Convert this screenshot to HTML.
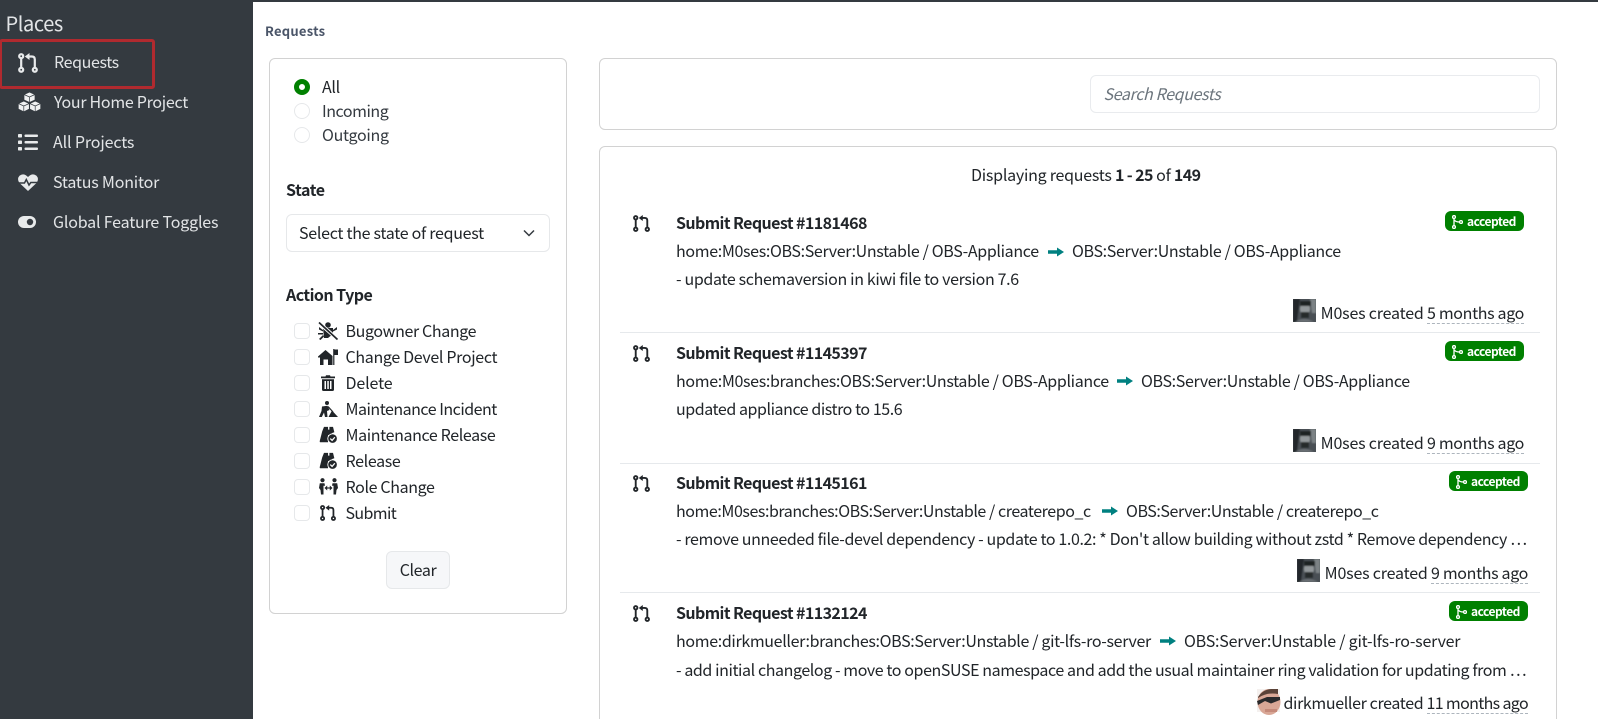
<!DOCTYPE html>
<html lang="en">
<head>
<meta charset="utf-8">
<title>Requests</title>
<style>
html,body{margin:0;padding:0;width:1598px;height:719px;overflow:hidden;background:#fff}
body{position:relative;font-family:"Noto Sans CJK JP","Liberation Sans",sans-serif;font-size:16px;color:#212529;letter-spacing:-.34px}
.t{position:absolute;white-space:nowrap;line-height:24px;height:24px;transform:translateY(-1px)}
.b{font-weight:700}
.ti{letter-spacing:-.59px}
.box{position:absolute;box-sizing:border-box}
.card{border:1px solid #d2d2d2;border-radius:6px;background:#fff}
#side{left:0;top:0;width:253px;height:719px;background:#343a40}
#top{left:0;top:0;width:1598px;height:2px;background:#343a40}
.n{color:#e2e4e6}
.ck{left:294px;width:16px;height:16px;border:1px solid #e6e8ea;border-radius:4px}
.rd{left:294px;width:16px;height:16px;border:1px solid #e6e8ea;border-radius:50%}
.sep{left:620px;width:920px;height:1px;background:#e6e9ec}
.badge{height:20px;width:79px;background:#008000;border-radius:6px;color:#fff;font-size:12px;font-weight:700;line-height:20px;letter-spacing:-.5px}
.badge span{position:absolute;left:22px;top:1px}
.badge svg{position:absolute;left:7px;top:4px}
.au{letter-spacing:-.19px}
.dot{border-bottom:1px dashed #adb5bd;line-height:21px;display:inline-block;height:21px;letter-spacing:-.34px}
svg{position:absolute;overflow:visible}
.av{width:23px;height:23px}
</style>
</head>
<body>
<svg width="0" height="0" style="position:absolute">
<defs>
<filter id="soft" x="0" y="0" width="1" height="1"><feGaussianBlur stdDeviation=".7"/></filter>
<symbol id="pr" viewBox="0 0 20 20"><g fill="none" stroke="currentColor" stroke-width="2.200"><circle cx="3.2" cy="3.2" r="2"/><circle cx="3.2" cy="16.8" r="2"/><circle cx="16.8" cy="16.8" r="2"/><path d="M3.2 5.2V14.800M16.800 14.800V6.500Q16.800 3.500 13.800 3.500H10"/></g><path d="M11.500 0L6.800 3.500L11.500 7Z" fill="currentColor"/></symbol>
<symbol id="merge" viewBox="0 0 11 14"><g fill="none" stroke="#fff" stroke-width="1.300"><circle cx="2" cy="2" r="1.400"/><circle cx="2" cy="12" r="1.400"/><circle cx="9" cy="7" r="1.400"/><path d="M2 3.500V10.500M2.500 5Q3.500 7 7.500 7"/></g></symbol>
<symbol id="rel" viewBox="0 0 20 20"><path fill="currentColor" d="M5 1H9.500V18H.8Q0 18 .3 16.500L3 6ZM11 1H15L16.500 7Q12 8 11 12ZM9.500 4H11V10H9.500Z"/><circle cx="14.500" cy="14" r="5.300" fill="currentColor" stroke="#fff" stroke-width="1"/><path d="M12 14L14 16L17 12.500" fill="none" stroke="#fff" stroke-width="1.400"/></symbol>
<symbol id="arrow" viewBox="0 0 16 10"><path fill="#008080" d="M0 3.200H9V.5L16 5L9 9.500V6.800H0Z"/></symbol>
<symbol id="m0" viewBox="0 0 23 23"><rect width="23" height="23" fill="#4a5054"/><g filter="url(#soft)"><rect width="23" height="23" fill="#4a5054"/><path d="M0 0H7L4 23H0Z" fill="#23272b"/><path d="M17 0H23V14H19Z" fill="#7b8285"/><ellipse cx="12" cy="10" rx="5" ry="6.500" fill="#92979a"/><path d="M7 2H18V7H7Z" fill="#1d2023"/><path d="M8 13H16V19H8Z" fill="#25292c"/><path d="M2 23Q11 17 21 23Z" fill="#6a7074"/></g></symbol>
</defs>
</svg>

<div id="side" class="box"></div>
<div id="top" class="box"></div>
<div class="t n" style="left:5.500px;top:12px;font-size:20px;letter-spacing:-.4px">Places</div>
<div class="box" style="left:-1px;top:39px;width:156px;height:50px;border:3px solid #b02a2f;border-radius:3px"></div>

<svg style="left:18px;top:53px;color:#e8eaeb" width="20" height="20"><use href="#pr"/></svg>
<div class="t n" style="left:54px;top:50px;letter-spacing:-.38px">Requests</div>
<svg style="left:18px;top:92px" width="23" height="20" viewBox="0 0 23 20"><g fill="#f0f1f2" stroke="#343a40" stroke-width=".7"><path d="M11.500 0L17 2.500V8L11.500 10.500L6 8V2.500Z"/><path d="M6 2.500L11.500 5L17 2.500M11.500 5V10.500"/><path d="M5.800 9L11.300 11.500V17L5.800 19.800L.3 17V11.500Z"/><path d="M.3 11.500L5.800 14L11.300 11.500M5.800 14V19.800"/><path d="M17.200 9L22.700 11.500V17L17.200 19.800L11.700 17V11.500Z"/><path d="M11.700 11.500L17.200 14L22.700 11.500M17.200 14V19.800"/></g></svg>
<div class="t n" style="left:54px;top:90px;letter-spacing:-.28px">Your Home Project</div>
<svg style="left:18px;top:134px" width="20" height="17" viewBox="0 0 20 17" fill="#e8eaeb"><rect y="0" width="4" height="3.500" rx=".8"/><rect y="6.500" width="4" height="3.500" rx=".8"/><rect y="13" width="4" height="3.500" rx=".8"/><rect x="6.500" y=".5" width="13.500" height="2.500" rx="1"/><rect x="6.500" y="7" width="13.500" height="2.500" rx="1"/><rect x="6.500" y="13.500" width="13.500" height="2.500" rx="1"/></svg>
<div class="t n" style="left:53px;top:130px;letter-spacing:-.13px">All Projects</div>
<svg style="left:18px;top:174px" width="20" height="17" viewBox="0 0 20 17"><path fill="#e8eaeb" d="M10 17L1.500 9Q-1.500 5 1.500 1.800Q5.500-1.500 10 3Q14.500-1.500 18.500 1.800Q21.500 5 18.500 9Z"/><path d="M0 9H6.500L8.300 5.500L11 11L12.800 8.500H20" fill="none" stroke="#343a40" stroke-width="1.500"/></svg>
<div class="t n" style="left:53px;top:170px;letter-spacing:-.2px">Status Monitor</div>
<svg style="left:18px;top:216px" width="18" height="12" viewBox="0 0 18 12"><rect width="18" height="12" rx="6" fill="#e8eaeb"/><circle cx="12" cy="6" r="3.200" fill="#343a40"/></svg>
<div class="t n" style="left:53px;top:210px;letter-spacing:-.18px">Global Feature Toggles</div>

<div class="t b" style="left:265px;top:20px;font-size:13px;color:#4a5568;letter-spacing:.25px">Requests</div>

<div class="box card" style="left:269px;top:58px;width:298px;height:556px"></div>
<div class="box" style="left:294px;top:79px;width:16px;height:16px;border:5px solid #008000;border-radius:50%"></div>
<div class="t" style="left:322px;top:75px">All</div>
<div class="box rd" style="top:103px"></div>
<div class="t" style="left:322px;top:99px;color:#343a40;letter-spacing:-.45px">Incoming</div>
<div class="box rd" style="top:127px"></div>
<div class="t" style="left:322px;top:123px;color:#343a40;letter-spacing:-.3px">Outgoing</div>
<div class="t b" style="left:286px;top:178px;letter-spacing:-.42px">State</div>
<div class="box" style="left:286px;top:214px;width:264px;height:38px;border:1px solid #e6e8ea;border-radius:6px"></div>
<div class="t" style="left:299px;top:221px;letter-spacing:-.28px">Select the state of request</div>
<svg style="left:523px;top:229px" width="12" height="8" viewBox="0 0 12 8"><path d="M1 1.500L6 6.500L11 1.500" fill="none" stroke="#343a40" stroke-width="1.500"/></svg>
<div class="t b" style="left:286px;top:283px;letter-spacing:-.55px">Action Type</div>

<div class="box ck" style="top:323px"></div>
<svg style="left:318px;top:322px" width="20" height="18" viewBox="0 0 20 18"><g fill="#212529"><circle cx="10" cy="3" r="2.800"/><path d="M5 6H15V12L10 16H6Z"/><path d="M1 5L5 8V9.500L1 7.500ZM0 11H5V12.500H0ZM1 17L5 13L6 14.500L2.500 18ZM19 5L15 8V9.500L19 7.500ZM15 13L20 17L18 18L14 14Z"/></g><path d="M0 0L20 17.500" stroke="#fff" stroke-width="3.500"/><path d="M1 .5L19.500 17.500" stroke="#212529" stroke-width="1.700"/></svg>
<div class="t" style="left:345.500px;top:319px;letter-spacing:-.37px">Bugowner Change</div>

<div class="box ck" style="top:349px"></div>
<svg style="left:318px;top:349px" width="20" height="16" viewBox="0 0 20 16"><path fill="#212529" d="M7.500 1L14.500 7V16H10V10.500H5.500V16H2V8.500H0V7.500ZM15.200 0H16.400V16H15.200ZM16.400 .5H20V6H16.400Z"/></svg>
<div class="t" style="left:345.500px;top:345px;letter-spacing:-.33px">Change Devel Project</div>

<div class="box ck" style="top:375px"></div>
<svg style="left:321px;top:375px" width="14" height="16" viewBox="0 0 14 16"><path fill="#212529" d="M0 1.500H4.500L5 .3H9L9.500 1.500H14V3.300H0ZM1 4.300H13V14.500Q13 16 11.500 16H2.500Q1 16 1 14.500ZM3.500 6V14H5V6ZM6.300 6V14H7.800V6ZM9 6V14H10.500V6Z"/></svg>
<div class="t" style="left:345.500px;top:371px;letter-spacing:-.13px">Delete</div>

<div class="box ck" style="top:401px"></div>
<svg style="left:319px;top:401px" width="19" height="16" viewBox="0 0 19 16"><g fill="#212529"><circle cx="8" cy="2" r="2"/><path d="M3 5.500L8.500 4.800L10.500 9L8 10L8.500 16H6L5 11.500L2.800 16H0L2.500 10Z"/><path d="M9.500 16L13 9.500L19 16Z"/><path d="M9 5.500L14 11" stroke="#212529" stroke-width="1.200"/></g></svg>
<div class="t" style="left:345.500px;top:397px;letter-spacing:-.49px">Maintenance Incident</div>

<div class="box ck" style="top:427px"></div>
<svg style="left:319px;top:426px;color:#212529" width="19" height="18"><use href="#rel"/></svg>
<div class="t" style="left:345.500px;top:423px;letter-spacing:-.37px">Maintenance Release</div>

<div class="box ck" style="top:453px"></div>
<svg style="left:319px;top:452px;color:#212529" width="19" height="18"><use href="#rel"/></svg>
<div class="t" style="left:345.500px;top:449px;letter-spacing:-.35px">Release</div>

<div class="box ck" style="top:479px"></div>
<svg style="left:319px;top:478px" width="19" height="17" viewBox="0 0 19 17"><g fill="#212529"><circle cx="3.500" cy="2.200" r="2.100"/><circle cx="15.500" cy="2.200" r="2.100"/><path d="M.8 5.200H5.500L6 7.800H4.500V16.500H2L1.500 12L0 10ZM18.200 5.200H13.500L13 7.800H14.500V16.500H17L17.500 12L19 10Z"/><path d="M6.500 9.400H12.500V10.600H6.500Z"/><path d="M8.200 7.500V12.500L5.500 10ZM10.800 7.500V12.500L13.500 10Z"/></g></svg>
<div class="t" style="left:345.500px;top:475px;letter-spacing:-.36px">Role Change</div>

<div class="box ck" style="top:505px"></div>
<svg style="left:320px;top:505px;color:#212529" width="16" height="16"><use href="#pr"/></svg>
<div class="t" style="left:345.500px;top:501px;letter-spacing:-.62px">Submit</div>

<div class="box" style="left:386px;top:551px;width:64px;height:38px;background:#f6f7f9;border:1px solid #e6e8ea;border-radius:6px"></div>
<div class="t" style="left:386px;top:558px;width:64px;text-align:center;letter-spacing:-.4px">Clear</div>

<div class="box card" style="left:599px;top:58px;width:958px;height:72px"></div>
<div class="box" style="left:1090px;top:75px;width:450px;height:38px;border:1px solid #e9ebee;border-radius:6px"></div>
<div class="t" style="left:1103.500px;top:82px;font-style:italic;color:#6c757d;letter-spacing:-.37px">Search Requests</div>

<div class="box card" style="left:599px;top:146px;width:958px;height:600px"></div>
<div class="t" style="left:971px;top:163px;letter-spacing:-.25px">Displaying requests <span class="b" style="letter-spacing:-.6px">1 - 25</span> of <span class="b" style="letter-spacing:-.6px">149</span></div>

<!-- Row 1 -->
<svg style="left:633px;top:215px;color:#212529" width="17" height="17"><use href="#pr"/></svg>
<div class="t b ti" style="left:676px;top:211px">Submit Request #1181468</div>
<div class="box badge" style="left:1445px;top:211px"><svg width="11" height="14"><use href="#merge"/></svg><span>accepted</span></div>
<div class="t" style="left:676px;top:239px">home:M0ses:OBS:Server:Unstable / OBS-Appliance</div>
<svg style="left:1048px;top:247px" width="16" height="10"><use href="#arrow"/></svg>
<div class="t" style="left:1072px;top:239px">OBS:Server:Unstable / OBS-Appliance</div>
<div class="t" style="left:676px;top:267px">- update schemaversion in kiwi file to version 7.6</div>
<svg class="av" style="left:1293px;top:299px"><use href="#m0"/></svg>
<div class="t au" style="right:74px;top:301px">M0ses created <span class="dot">5 months ago</span></div>
<div class="box sep" style="top:332px"></div>

<!-- Row 2 -->
<svg style="left:633px;top:345px;color:#212529" width="17" height="17"><use href="#pr"/></svg>
<div class="t b ti" style="left:676px;top:341px">Submit Request #1145397</div>
<div class="box badge" style="left:1445px;top:341px"><svg width="11" height="14"><use href="#merge"/></svg><span>accepted</span></div>
<div class="t" style="left:676px;top:369px">home:M0ses:branches:OBS:Server:Unstable / OBS-Appliance</div>
<svg style="left:1117px;top:376px" width="16" height="10"><use href="#arrow"/></svg>
<div class="t" style="left:1141px;top:369px">OBS:Server:Unstable / OBS-Appliance</div>
<div class="t" style="left:676px;top:397px;letter-spacing:-.44px">updated appliance distro to 15.6</div>
<svg class="av" style="left:1293px;top:429px"><use href="#m0"/></svg>
<div class="t au" style="right:74px;top:431px">M0ses created <span class="dot">9 months ago</span></div>
<div class="box sep" style="top:463px"></div>

<!-- Row 3 -->
<svg style="left:633px;top:475px;color:#212529" width="17" height="17"><use href="#pr"/></svg>
<div class="t b ti" style="left:676px;top:471px">Submit Request #1145161</div>
<div class="box badge" style="left:1449px;top:471px"><svg width="11" height="14"><use href="#merge"/></svg><span>accepted</span></div>
<div class="t" style="left:676px;top:499px;letter-spacing:-.43px">home:M0ses:branches:OBS:Server:Unstable / createrepo_c</div>
<svg style="left:1102px;top:506px" width="16" height="10"><use href="#arrow"/></svg>
<div class="t" style="left:1126px;top:499px;letter-spacing:-.43px">OBS:Server:Unstable / createrepo_c</div>
<div class="t" style="left:676px;top:527px;letter-spacing:-.38px">- remove unneeded file-devel dependency - update to 1.0.2: * Don't allow building without zstd * Remove dependency …</div>
<svg class="av" style="left:1297px;top:559px"><use href="#m0"/></svg>
<div class="t au" style="right:70px;top:561px">M0ses created <span class="dot">9 months ago</span></div>
<div class="box sep" style="top:592px"></div>

<!-- Row 4 -->
<svg style="left:633px;top:605px;color:#212529" width="17" height="17"><use href="#pr"/></svg>
<div class="t b ti" style="left:676px;top:601px">Submit Request #1132124</div>
<div class="box badge" style="left:1449px;top:601px"><svg width="11" height="14"><use href="#merge"/></svg><span>accepted</span></div>
<div class="t" style="left:676px;top:629px">home:dirkmueller:branches:OBS:Server:Unstable / git-lfs-ro-server</div>
<svg style="left:1160px;top:636px" width="16" height="10"><use href="#arrow"/></svg>
<div class="t" style="left:1184px;top:629px;letter-spacing:-.21px">OBS:Server:Unstable / git-lfs-ro-server</div>
<div class="t" style="left:676px;top:658px;letter-spacing:-.41px">- add initial changelog - move to openSUSE namespace and add the usual maintainer ring validation for updating from …</div>
<svg class="av" style="left:1257px;top:689px" viewBox="0 0 23 23"><rect width="23" height="23" fill="#f4f0ee"/><ellipse cx="12" cy="13" rx="11.500" ry="13" fill="#d9a796"/><path d="M1 8Q6 .5 14 0H21V5Q10 3 1 9Z" fill="#5a4238"/><path d="M0 12L10 8H23V11L14 14.500L8 12L1 16Z" fill="#2a2a2c"/><path d="M8 20H20V23H8Z" fill="#c58a7a"/></svg>
<div class="t" style="right:70px;top:691px;letter-spacing:-.36px">dirkmueller created <span class="dot" style="letter-spacing:-.65px">11 months ago</span></div>
</body>
</html>
